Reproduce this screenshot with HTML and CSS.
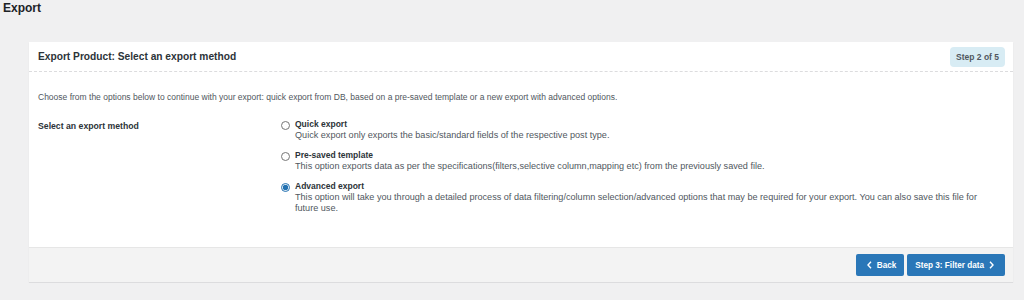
FILE: index.html
```html
<!DOCTYPE html>
<html lang="en">

<head>
  <meta charset="UTF-8">
  <meta name="viewport" content="width=device-width, initial-scale=1.0">
  <title>Export</title>
  <link rel="stylesheet" href="styles.css">
</head>

<body>
  <h1 class="page-title">Export</h1>

  <div class="export-card">
    <div class="export-card-header">
      <h2>Export Product: Select an export method</h2>
      <span class="step-badge">Step 2 of 5</span>
    </div>

    <div class="export-card-body">
      <p class="intro">Choose from the options below to continue with your export: quick export from DB, based on a pre-saved template or a new export with advanced options.</p>

      <div class="method-row">
        <div class="method-label">Select an export method</div>
        <div class="method-options">
          <label class="option">
            <input type="radio" name="method" value="quick">
            <span class="option-text">
              <span class="option-title">Quick export</span>
              <span class="option-desc">Quick export only exports the basic/standard fields of the respective post type.</span>
            </span>
          </label>
          <label class="option">
            <input type="radio" name="method" value="template">
            <span class="option-text">
              <span class="option-title">Pre-saved template</span>
              <span class="option-desc">This option exports data as per the specifications(filters,selective column,mapping etc) from the previously saved file.</span>
            </span>
          </label>
          <label class="option">
            <input type="radio" name="method" value="advanced" checked>
            <span class="option-text">
              <span class="option-title">Advanced export</span>
              <span class="option-desc">This option will take you through a detailed process of data filtering/column selection/advanced options that may be required for your export. You can also save this file for future use.</span>
            </span>
          </label>
        </div>
      </div>
    </div>

    <div class="export-card-footer">
      <button class="btn btn-back">
        <svg class="chev" width="5" height="8" viewBox="0 0 5 8"><path d="M4 0.8 L1 4 L4 7.2" fill="none" stroke="white" stroke-width="1.4"/></svg>
        Back
      </button>
      <button class="btn btn-next">
        Step 3: Filter data
        <svg class="chev" width="5" height="8" viewBox="0 0 5 8"><path d="M1 0.8 L4 4 L1 7.2" fill="none" stroke="white" stroke-width="1.4"/></svg>
      </button>
    </div>
  </div>
</body>

</html>
```

FILE: styles.css
```css
body {
  margin: 0;
  padding: 0;
  background-color: #f0f0f1;
  font-family: "Liberation Sans", Arial, sans-serif;
  color: #3c434a;
  font-size: 8.5px;
}

.page-title {
  margin: 0;
  padding: 1px 0 0 3px;
  font-size: 12px;
  font-weight: 600;
  color: #1d2327;
  height: 42px;
  box-sizing: border-box;
}

.export-card {
  margin: 0 11px 0 29px;
  background: white;
  box-shadow: 0 1px 1px rgba(0, 0, 0, 0.08);
  border-bottom: 1px solid #dcdcde;
}

.export-card-header {
  display: flex;
  align-items: center;
  justify-content: space-between;
  height: 29px;
  padding: 0 8px 0 9px;
  border-bottom: 1px dashed #dcdcde;
}

.export-card-header h2 {
  margin: 0;
  font-size: 10.2px;
  font-weight: 600;
  color: #2c3338;
}

.step-badge {
  background: #d8ecf4;
  color: #50575e;
  font-weight: 600;
  font-size: 8.5px;
  padding: 5px 6px;
  border-radius: 4px;
}

.export-card-body {
  padding: 20px 9px 33px;
}

.intro {
  margin: 0 0 17px;
  color: #50575e;
}

.method-row {
  display: flex;
}

.method-label {
  width: 243px;
  font-size: 8.7px;
  font-weight: 600;
  color: #2c3338;
  padding-top: 2px;
}

.method-options {
  flex: 1;
  display: flex;
  flex-direction: column;
  gap: 9px;
  padding-right: 10px;
}

.option {
  display: flex;
  align-items: flex-start;
  gap: 5px;
}

.option input {
  margin: 2px 0 0;
  width: 9px;
  height: 9px;
  accent-color: #2271b1;
}

.option-text {
  display: flex;
  flex-direction: column;
  line-height: 11px;
}

.option-title {
  font-weight: 600;
  color: #2c3338;
}

.option-desc {
  font-size: 9.1px;
  color: #50575e;
}

.export-card-footer {
  display: flex;
  justify-content: flex-end;
  gap: 3px;
  height: 34px;
  align-items: center;
  padding: 0 8px;
  background: #f3f3f3;
  border-top: 1px solid #e6e6e6;
}

.btn {
  display: flex;
  align-items: center;
  gap: 5px;
  background: #2a77b8;
  color: white;
  border: none;
  border-radius: 2px;
  height: 22px;
  font-family: inherit;
  font-size: 8.2px;
  font-weight: 600;
}

.btn-back {
  padding: 0 8px 0 11px;
}

.btn-next {
  padding: 0 11px 0 8px;
}
```
